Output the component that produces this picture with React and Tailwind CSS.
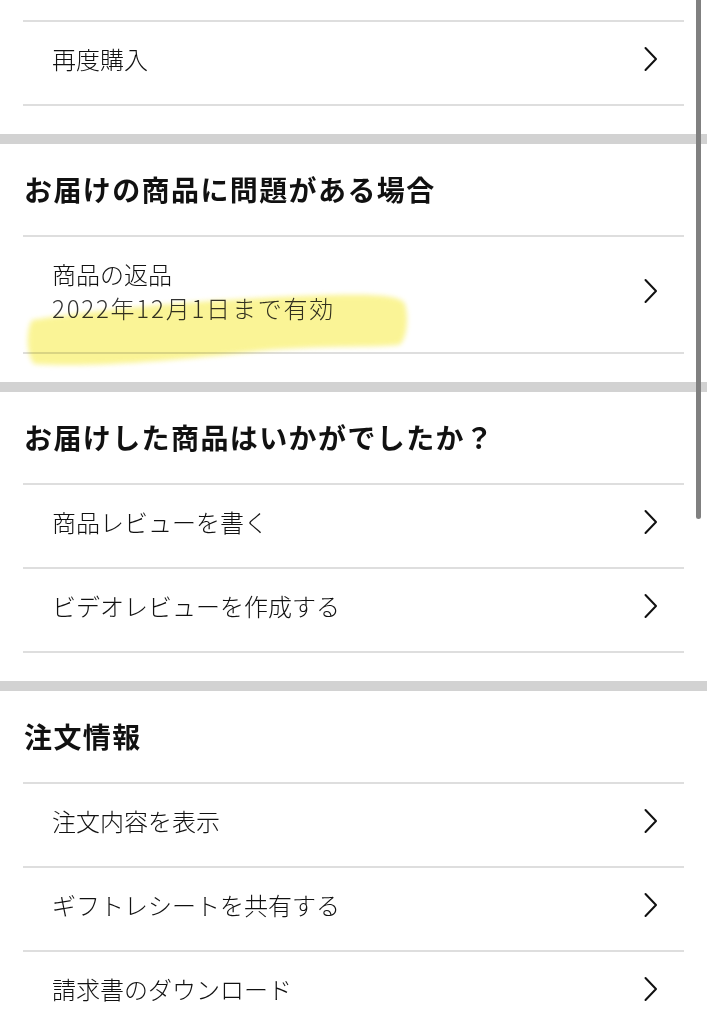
import React from 'react';

const font = { fontFamily: '"Noto Sans CJK JP", "Noto Sans", sans-serif' };

const Chevron = () => (
  <svg width="16" height="26" viewBox="0 0 16 26" fill="none" stroke="#111" strokeWidth="2" strokeLinecap="round" strokeLinejoin="round">
    <path d="M2.5 2 L13 13 L2.5 24" />
  </svg>
);

const Divider = () => <div className="mx-[23px] h-[2px] bg-[#dedede]" />;

const Band = () => <div className="mt-[28px] h-[10px] bg-[#d2d2d2]" />;

const Row = ({ label }) => (
  <div className="mx-[23px] flex h-[82px] items-center justify-between pb-[8px] pl-[29px] pr-[25px]">
    <span className="text-[24px] font-light leading-none text-[#111]">{label}</span>
    <Chevron />
  </div>
);

const Header = ({ title }) => (
  <div className="flex h-[91px] items-center pb-[2px] px-[24px]">
    <h2 className="text-[28px] font-bold leading-none tracking-[1.4px] text-[#111]">{title}</h2>
  </div>
);

// Section list: rows shown under each header
const sections = [
  {
    title: 'お届けした商品はいかがでしたか？',
    rows: ['商品レビューを書く', 'ビデオレビューを作成する'],
  },
  {
    title: '注文情報',
    rows: ['注文内容を表示', 'ギフトレシートを共有する', '請求書のダウンロード'],
  },
];

const App = () => {
  return (
    <div className="relative h-[1024px] w-[707px] overflow-hidden bg-white" style={font}>
      {/* tail of previous section */}
      <div className="h-[20px]" />
      <Divider />
      <Row label="再度購入" />
      <Divider />
      <Band />

      {/* problems with delivery */}
      <Header title="お届けの商品に問題がある場合" />
      <Divider />
      <div className="relative mx-[23px] flex h-[115px] items-center justify-between pb-[8px] pl-[29px] pr-[25px]">
        <div className="flex flex-col">
          <span className="text-[24px] font-light leading-[34px] text-[#111]">商品の返品</span>
          <span className="text-[24px] font-light leading-[34px] tracking-[1.8px] text-[#333]">2022年12月1日まで有効</span>
        </div>
        <Chevron />
      </div>
      <Divider />

      {sections.map((s) => (
        <div key={s.title}>
          <Band />
          <Header title={s.title} />
          {s.rows.map((r, i) => (
            <div key={r}>
              <Divider />
              <Row label={r} />
              {i === s.rows.length - 1 && s.rows.length < 3 && <Divider />}
            </div>
          ))}
        </div>
      ))}

      {/* yellow marker highlight */}
      <svg className="pointer-events-none absolute left-0 top-0 mix-blend-multiply" width="707" height="1024">
        <defs>
          <filter id="soft" x="-10%" y="-50%" width="120%" height="200%">
            <feGaussianBlur stdDeviation="2.5" />
          </filter>
        </defs>
        <path
          d="M32 320 C 90 310, 200 300, 300 296 C 360 294, 400 293, 405 304 C 409 318, 407 340, 399 345 C 360 348, 310 345, 250 352 C 180 360, 90 368, 34 364 C 26 355, 26 330, 32 320 Z"
          fill="#f9f27c"
          opacity="0.8"
          filter="url(#soft)"
        />
      </svg>

      {/* scrollbar */}
      <div className="absolute right-[6px] top-0 h-[519px] w-[5px] rounded-b-full bg-[#808080]" />
    </div>
  );
};

export default App;
